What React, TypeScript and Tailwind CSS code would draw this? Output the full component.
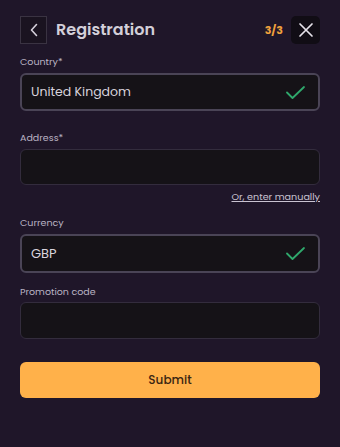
import React from "react";

const font = { fontFamily: "Poppins, 'Noto Sans', 'DejaVu Sans', sans-serif" };

function Check() {
  return (
    <svg width="19" height="13" viewBox="0 0 19 13" fill="none">
      <path d="M1 6.5 L6.5 12 L18 1" stroke="#2fa86c" strokeWidth="1.8" strokeLinecap="round" strokeLinejoin="round" />
    </svg>
  );
}

function Label({ children, className = "" }: { children: React.ReactNode; className?: string }) {
  return <div className={"text-[9.5px] leading-4 text-[#b9b3c3] " + className}>{children}</div>;
}

export default function App() {
  return (
    <div style={font} className="w-[340px] h-[447px] bg-[#1f1629] px-5 pt-4 flex flex-col">
      <div className="flex items-center h-7">
        <button className="w-[27px] h-7 border border-[#3a3342] bg-[#1a1320] flex items-center justify-center">
          <svg width="10" height="14" viewBox="0 0 10 14" fill="none">
            <path d="M7.5 1.5 L2.5 7 L7.5 12.5" stroke="#d6d1dc" strokeWidth="1.6" strokeLinecap="round" strokeLinejoin="round" />
          </svg>
        </button>
        <div className="ml-[9px] text-[16px] font-semibold text-[#d3cfd9] leading-7">Registration</div>
        <div className="ml-auto text-[11px] font-bold text-[#f0a13d] mr-[8px]">3/3</div>
        <button className="w-[29px] h-7 rounded-[5px] bg-[#110d15] flex items-center justify-center">
          <svg width="16" height="16" viewBox="0 0 16 16" fill="none">
            <path d="M2 2 L14 14 M14 2 L2 14" stroke="#e6e2ea" strokeWidth="1.7" strokeLinecap="round" />
          </svg>
        </button>
      </div>

      <Label className="mt-[10px]">Country*</Label>
      <div className="mt-[3px] h-[38px] rounded-[6px] border-2 border-[#4a4456] bg-[#151217] flex items-center px-[9px]">
        <span className="text-[12.5px] text-[#d9d4de]">United Kingdom</span>
        <span className="ml-auto mr-[4px] flex"><Check /></span>
      </div>

      <Label className="mt-[19px]">Address*</Label>
      <div className="mt-[3px] h-9 rounded-[6px] border border-[#332c3d] bg-[#151217]"></div>
      <div className="mt-[4px] flex justify-end">
        <a className="text-[9.6px] leading-4 text-[#c9c3d1] underline">Or, enter manually</a>
      </div>

      <Label className="mt-[10px]">Currency</Label>
      <div className="mt-[3px] h-[39px] rounded-[6px] border-2 border-[#4a4456] bg-[#151217] flex items-center px-[9px]">
        <span className="text-[13px] text-[#d9d4de]">GBP</span>
        <span className="ml-auto mr-[4px] flex"><Check /></span>
      </div>

      <Label className="mt-[11px]">Promotion code</Label>
      <div className="mt-[2px] h-[37px] rounded-[6px] border border-[#332c3d] bg-[#151217]"></div>

      <button className="mt-[23px] h-9 rounded-[6px] bg-[#ffb14a] text-[#3b2512] text-[12px] font-medium flex items-center justify-center">
        Submit
      </button>
    </div>
  );
}
